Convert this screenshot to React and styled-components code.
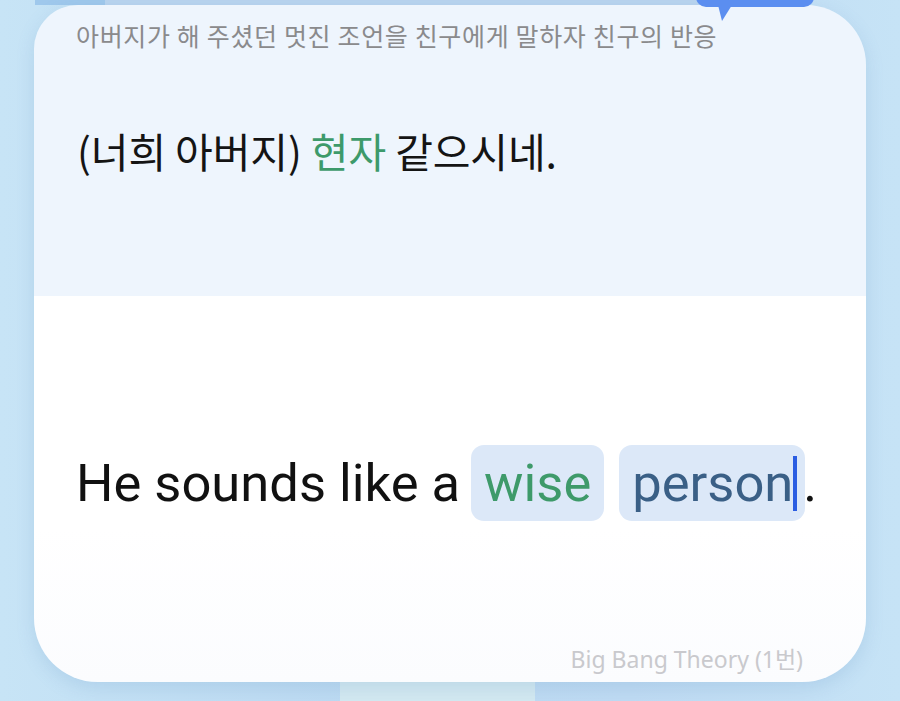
import React from "react";
import styled, { createGlobalStyle } from "styled-components";

const Global = createGlobalStyle`
  html, body {
    margin: 0;
    padding: 0;
  }
  body {
    width: 900px;
    height: 701px;
    overflow: hidden;
  }
`

const Page = styled.div`
  width: 900px;
  height: 701px;
  box-sizing: border-box;
  padding: 5px 34px 19px 34px;
  background:
    linear-gradient(180deg, #9fc8ec 0px, #9fc8ec 5px, transparent 5px) 35px 0 / 70px 100% no-repeat,
    linear-gradient(180deg, #b9d4ef 0px, #b9d4ef 5px, transparent 5px) 105px 0 / 600px 100% no-repeat,
    linear-gradient(180deg, transparent 682px, #d3e9f1 682px) 340px 0 / 195px 100% no-repeat,
    linear-gradient(90deg, #c7e4f6 0%, #bcdaf2 40%, #bfdbf3 70%, #c6e3f6 100%);
  font-family: Roboto, "Noto Sans CJK KR", sans-serif;
`

const Card = styled.div`
  position: relative;
  height: 100%;
  display: flex;
  flex-direction: column;
  border-radius: 44px 60px 64px 64px;
  box-shadow: 0 6px 18px rgba(90, 140, 190, 0.18);
`

const Bubble = styled.div`
  position: absolute;
  top: -20px;
  left: 662px;
  width: 118px;
  height: 22px;
  border-radius: 10px;
  background: #5b8ef0;
  z-index: 2;

  &::after {
    content: "";
    position: absolute;
    left: 22px;
    top: 20px;
    width: 0;
    height: 0;
    border-left: 4px solid transparent;
    border-right: 10px solid transparent;
    border-top: 16px solid #5b8ef0;
  }
`

const TopPanel = styled.section`
  height: 291px;
  flex-shrink: 0;
  box-sizing: border-box;
  padding: 13px 42px 0 42px;
  background: #eef5fd;
  border-radius: 44px 60px 0 0;
`

const Context = styled.p`
  margin: 0;
  font-family: "Noto Sans CJK KR", sans-serif;
  font-size: 25px;
  line-height: 34px;
  color: #8a8a8c;
  letter-spacing: 0.65px;
`

const Korean = styled.p`
  margin: 69px 0 0 1px;
  font-family: "Noto Sans CJK KR", sans-serif;
  font-size: 41px;
  line-height: 58px;
  color: #141414;
  letter-spacing: -0.1px;
`

const Hl = styled.span`
  color: ${(p) => p.$color || "#3d9a6b"};
`

const BottomPanel = styled.section`
  flex: 1;
  display: flex;
  flex-direction: column;
  box-sizing: border-box;
  padding: 0 63px 8px 42px;
  background: linear-gradient(180deg, #ffffff 60%, #fbfcfe 100%);
  border-radius: 0 0 64px 64px;
`

const Sentence = styled.div`
  flex: 1;
  display: flex;
  align-items: center;
  padding-top: 26px;
  font-family: Roboto, sans-serif;
  font-size: 52.5px;
  color: #111;
  white-space: pre;
`

const Blank = styled.span`
  display: inline-flex;
  align-items: center;
  height: 76px;
  padding: 0 ${(p) => p.$padRight || 13}px 0 13px;
  margin-left: ${(p) => p.$gap || 0}px;
  margin-right: -2px;
  border-radius: 13px;
  background: #dce8f8;
  color: ${(p) => p.$color};
`

const Caret = styled.span`
  display: inline-block;
  width: 4px;
  height: 55px;
  background: #2b5de2;
`

const Source = styled.div`
  align-self: flex-end;
  font-family: "Noto Sans", "Noto Sans CJK KR", sans-serif;
  font-size: 23px;
  line-height: 30px;
  color: #c9c9cd;
`

export default function App() {
  return (
    <>
      <Global />
      <Page>
        <Card>
          <Bubble />
          <TopPanel>
            <Context>아버지가 해 주셨던 멋진 조언을 친구에게 말하자 친구의 반응</Context>
            <Korean>
              (너희 아버지) <Hl>현자</Hl> 같으시네.
            </Korean>
          </TopPanel>
          <BottomPanel>
            <Sentence>
              He sounds like a
              <Blank $color="#3e9a6a" $gap={11}>wise</Blank>
              <Blank $color="#3a5f86" $gap={17} $padRight={8}>person<Caret /></Blank>.
            </Sentence>
            <Source>Big Bang Theory (1번)</Source>
          </BottomPanel>
        </Card>
      </Page>
    </>
  );
}
